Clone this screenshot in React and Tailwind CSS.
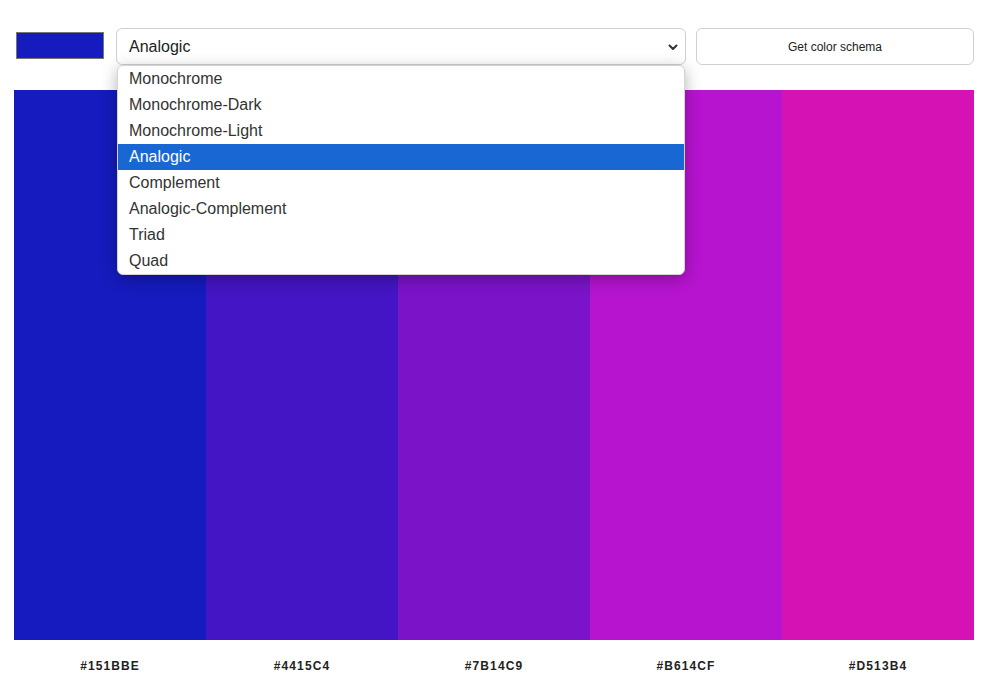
import React from "react";

const colors = ["#151BBE", "#4415C4", "#7B14C9", "#B614CF", "#D513B4"];
const options = [
  "Monochrome",
  "Monochrome-Dark",
  "Monochrome-Light",
  "Analogic",
  "Complement",
  "Analogic-Complement",
  "Triad",
  "Quad",
];

export default function App() {
  return (
    <div
      className="relative w-[1005px] h-[698px] bg-white overflow-hidden"
      style={{ fontFamily: '"Liberation Sans", Arial, sans-serif' }}
    >
      <div className="flex items-center pl-[16px] pt-[28px]">
        <div className="w-[88px] h-[27px] border border-[#767676] bg-[#151BBE] mt-[-2px]" />
        <div className="ml-[12px] w-[570px] h-[37px] border border-[#d0d0d0] rounded-[6px] bg-white flex items-center justify-between pl-[12px] pr-[6px] text-[16px] text-[#222]">
          <span>Analogic</span>
          <svg width="12" height="12" viewBox="0 0 12 12">
            <path d="M2.5 4.5 L6 8 L9.5 4.5" fill="none" stroke="#333" strokeWidth="2" strokeLinecap="round" strokeLinejoin="round" />
          </svg>
        </div>
        <div className="ml-[10px] w-[278px] h-[37px] border border-[#d0d0d0] rounded-[6px] bg-white flex items-center justify-center text-[12px] text-[#222]">
          Get color schema
        </div>
      </div>

      <div className="mt-[25px] ml-[14px] w-[960px] flex h-[550px]">
        {colors.map((c) => (
          <div key={c} className="flex-1" style={{ backgroundColor: c }} />
        ))}
      </div>
      <div className="ml-[14px] w-[960px] flex">
        {colors.map((c) => (
          <div
            key={c}
            className="flex-1 text-center pt-[17px] text-[12px] font-bold tracking-[1.1px] text-[#222]"
          >
            {c}
          </div>
        ))}
      </div>

      <div className="absolute left-[117px] top-[65px] w-[568px] bg-white rounded-[6px] border border-[#d4d4d4] shadow-[0_4px_16px_rgba(0,0,0,0.3)] overflow-hidden">
        {options.map((o) => (
          <div
            key={o}
            className={
              "h-[26px] flex items-center pl-[11px] text-[16px] " +
              (o === "Analogic" ? "bg-[#1967D2] text-white" : "text-[#333]")
            }
          >
            {o}
          </div>
        ))}
      </div>
    </div>
  );
}
